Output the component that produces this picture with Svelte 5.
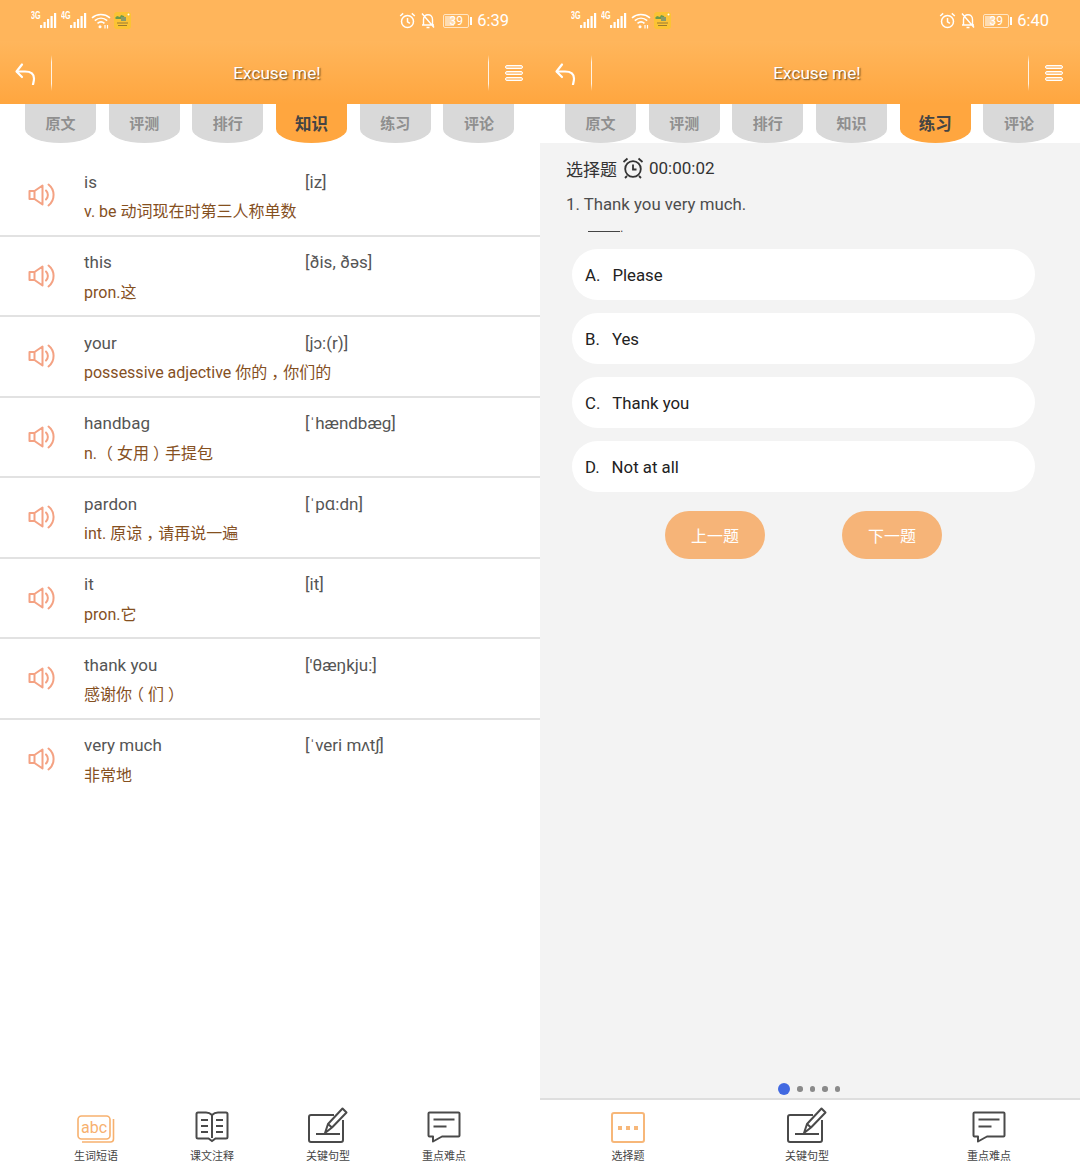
<script>
  const tabs = ['原文', '评测', '排行', '知识', '练习', '评论'];

  const words = [
    { en: 'is', ipa: '[iz]', cn: 'v. be 动词现在时第三人称单数' },
    { en: 'this', ipa: '[ðis, ðəs]', cn: 'pron.这' },
    { en: 'your', ipa: '[jɔ:(r)]', cn: 'possessive adjective 你的，你们的' },
    { en: 'handbag', ipa: '[ˈhændbæg]', cn: 'n. （女用）手提包' },
    { en: 'pardon', ipa: '[ˈpɑ:dn]', cn: 'int. 原谅，请再说一遍' },
    { en: 'it', ipa: '[it]', cn: 'pron.它' },
    { en: 'thank you', ipa: "['θæŋkju:]", cn: '感谢你（们）' },
    { en: 'very much', ipa: '[ˈveri mʌtʃ]', cn: '非常地' }
  ];

  const options = [
    { key: 'A.', text: 'Please' },
    { key: 'B.', text: 'Yes' },
    { key: 'C.', text: 'Thank you' },
    { key: 'D.', text: 'Not at all' }
  ];

  // full-width punctuation sits centred in the cell on the device
  const parts = (s) => s.split(/([，（）])/);
  const isPunct = (s) => /^[，（）]$/.test(s);
</script>

{#snippet bars(label)}
  <span class="net">
    <i class="net-label">{label}</i>
    <svg width="17" height="15" viewBox="0 0 17 15">
      <g fill="#fff">
        <rect x="0" y="12" width="2.2" height="3" />
        <rect x="3.500" y="9" width="2.2" height="6" />
        <rect x="7" y="6" width="2.2" height="9" />
        <rect x="10.500" y="3" width="2.2" height="12" />
        <rect x="14" y="0" width="2.2" height="15" />
      </g>
    </svg>
  </span>
{/snippet}

{#snippet statusbar(time)}
  <div class="status">
    <div class="status-left">
      {@render bars('3G')}
      {@render bars('4G')}
      <svg class="wifi" width="20" height="16" viewBox="0 0 20 16" fill="none" stroke="#fff" stroke-width="1.6">
        <path d="M1 4.800C6 .4 13.500 .4 19 4.800" />
        <path d="M3.800 7.600C7.500 4.500 12.500 4.500 16.200 7.600" />
        <path d="M6.500 10.300C8.600 8.600 11.400 8.600 13.500 10.300" />
        <circle cx="9" cy="13.800" r="1.500" fill="#fff" stroke="none" />
        <path d="M14 12v3.500M16.500 12v3.500" stroke-width="1.200" />
      </svg>
      <svg class="appicon" width="17" height="17" viewBox="0 0 17 17">
        <rect width="17" height="17" rx="3" fill="#fcc334" />
        <path d="M1 6l2-2 3 1 1-2 3 1 1 3H2z" fill="#6d9a4a" />
        <rect x="7" y="5" width="5" height="4" fill="#8a9a6a" />
        <path d="M3 11h11M4 13.500h9" stroke="#9a7a30" stroke-width="1" />
        <circle cx="14.500" cy="2.500" r="1" fill="#fff" />
      </svg>
    </div>
    <div class="status-right">
      <svg width="17" height="17" viewBox="0 0 17 17" fill="none" stroke="#fff" stroke-width="1.500">
        <circle cx="8.500" cy="9.500" r="6" />
        <path d="M8.500 6v3.800l2.400 1.600M1.200 4l3-2.600M15.800 4l-3-2.600" />
      </svg>
      <svg class="bell" width="16" height="17" viewBox="0 0 16 17" fill="none" stroke="#fff" stroke-width="1.400">
        <path d="M3.500 12.500V7.500C3.500 4.500 5.500 2.800 8 2.800s4.500 1.700 4.500 4.700v5M2 13h12M6.500 15.500h3M2 1.500l12 14" />
      </svg>
      <span class="battery"><b></b><em>39</em></span>
      <span class="battery-tip"></span>
      <span class="time">{time}</span>
    </div>
  </div>
{/snippet}

{#snippet topbar()}
  <header class="topbar">
    <button class="back" aria-label="back">
      <svg width="24" height="24" viewBox="0 0 24 24" fill="none" stroke="#fff" stroke-width="2.200" stroke-linecap="round" stroke-linejoin="round">
        <path d="M8 3.500L2.500 10.500 8 16" />
        <path d="M3 10.500H11c5.500 0 9 2.500 9 7 0 2-.5 3.500-1 6" />
      </svg>
    </button>
    <span class="divider"></span>
    <h1>Excuse me!</h1>
    <span class="divider"></span>
    <button class="menu" aria-label="menu"><i></i><i></i><i></i></button>
  </header>
{/snippet}

{#snippet tabbar(active)}
  <nav class="tabs">
    {#each tabs as tab}
      <span class="tab" class:active={tab === active}>{tab}</span>
    {/each}
  </nav>
{/snippet}

{#snippet speaker()}
  <svg class="speaker" width="28" height="26" viewBox="0 0 28 26" fill="none" stroke="#f4a283" stroke-width="2" stroke-linejoin="round" stroke-linecap="round">
    <path d="M1.500 9h5v8h-5zM6.500 9l8-5.500v19l-8-5.500" />
    <path d="M18 8.500c2.500 2.500 2.500 6.500 0 9" />
    <path d="M20.500 2.500c6.500 5 7 15.500 0 21" />
  </svg>
{/snippet}

{#snippet iconAbc()}
  <svg width="38" height="28" viewBox="0 0 38 28" fill="none" stroke="#f7b16f" stroke-width="1.600">
    <rect x="1" y="1" width="32" height="23" rx="3.500" />
    <path d="M36.500 4v20c0 2-1 3-3 3H5" />
    <text x="17" y="18" text-anchor="middle" class="abc">abc</text>
  </svg>
{/snippet}

{#snippet iconBook()}
  <svg width="34" height="32" viewBox="0 0 34 32" fill="none" stroke="#4a4a4a" stroke-width="2">
    <path d="M17 4c-2-2-4-2.500-6-2.500H3C2 1.500 1.500 2 1.500 3v23c0 1 .5 1.500 1.500 1.500h10.500L17 30l3.500-2.500H31c1 0 1.500-.5 1.500-1.500V3c0-1-.5-1.500-1.500-1.500h-8C21 1.500 19 2 17 4zv23" />
    <path d="M6 9h7M6 15h7M6 21h7M21 9h7M21 15h7M21 21h7" />
  </svg>
{/snippet}

{#snippet iconPen()}
  <svg width="40" height="36" viewBox="0 0 40 36" fill="none" stroke="#4a4a4a" stroke-width="2" stroke-linejoin="round">
    <path d="M26 8H3c-1.200 0-2 .8-2 2v23c0 1.200.8 2 2 2h30c1.200 0 2-.8 2-2V13" />
    <path d="M8 27h24" />
    <path d="M17 26l3-9L34.500 1.500l4 4L24 20.500zM20 17l4 3.500" />
  </svg>
{/snippet}

{#snippet iconChat()}
  <svg width="34" height="32" viewBox="0 0 34 32" fill="none" stroke="#4a4a4a" stroke-width="2" stroke-linejoin="round">
    <path d="M2.500 1.500h29c.6 0 1 .4 1 1v22c0 .6-.4 1-1 1H15L6 30.500v-5H2.500c-.6 0-1-.4-1-1v-22c0-.6.4-1 1-1z" />
    <path d="M6.500 8.500h21M6.500 15.500h13" />
  </svg>
{/snippet}

{#snippet iconDots()}
  <svg width="34" height="31" viewBox="0 0 34 31" fill="none">
    <rect x="1" y="1" width="32" height="29" rx="2" stroke="#f7b779" stroke-width="2" />
    <g fill="#f7b779">
      <rect x="7" y="14" width="4" height="4" />
      <rect x="15" y="14" width="4" height="4" />
      <rect x="23" y="14" width="4" height="4" />
    </g>
  </svg>
{/snippet}

<div class="screen">
  <section class="panel">
    {@render statusbar('6:39')}
    {@render topbar()}
    {@render tabbar('知识')}
    <ul class="words">
      {#each words as w}
        <li>
          {@render speaker()}
          <div class="word-text">
            <div class="word-top">
              <span class="en">{w.en}</span>
              <span class="ipa">{w.ipa}</span>
            </div>
            <div class="cn">
              {#each parts(w.cn) as part}
                {#if isPunct(part)}<span class="punct">{part}</span>{:else}{part}{/if}
              {/each}
            </div>
          </div>
        </li>
      {/each}
    </ul>
    <footer class="bottom four">
      <div class="nav-item">{@render iconAbc()}<span>生词短语</span></div>
      <div class="nav-item">{@render iconBook()}<span>课文注释</span></div>
      <div class="nav-item">{@render iconPen()}<span>关键句型</span></div>
      <div class="nav-item">{@render iconChat()}<span>重点难点</span></div>
    </footer>
  </section>

  <section class="panel">
    {@render statusbar('6:40')}
    {@render topbar()}
    {@render tabbar('练习')}
    <main class="quiz">
      <div class="quiz-head">
        <span class="quiz-title">选择题</span>
        <svg width="22" height="22" viewBox="0 0 22 22" fill="none" stroke="#333" stroke-width="1.800">
          <circle cx="11" cy="12" r="7.800" />
          <path d="M11 7.500V12.500h3.500M1.500 5L5.500 1.500M20.500 5l-4-3.500M5 19l-2 2M17 19l2 2" />
        </svg>
        <span class="timer">00:00:02</span>
      </div>
      <p class="question">1. Thank you very much.</p>
      <p class="blank"><u></u>.</p>
      <div class="options">
        {#each options as o}
          <div class="option"><span class="key">{o.key}</span>{o.text}</div>
        {/each}
      </div>
      <div class="actions">
        <button class="step">上一题</button>
        <button class="step">下一题</button>
      </div>
      <div class="dots">
        <i class="current"></i><i></i><i></i><i></i><i></i>
      </div>
    </main>
    <footer class="bottom three">
      <div class="nav-item">{@render iconDots()}<span>选择题</span></div>
      <div class="nav-item">{@render iconPen()}<span>关键句型</span></div>
      <div class="nav-item">{@render iconChat()}<span>重点难点</span></div>
    </footer>
  </section>
</div>

<style>
  :global(body) {
    background: #fff;
  }
  .screen {
    display: flex;
    width: 1080px;
    height: 1170px;
    font-family: Roboto, "Noto Sans CJK SC", sans-serif;
    overflow: hidden;
  }
  .panel {
    width: 540px;
    height: 1170px;
    display: flex;
    flex-direction: column;
    background: #fff;
  }

  .status {
    height: 41px;
    flex: none;
    background: #ffb55b;
    display: flex;
    justify-content: space-between;
    align-items: center;
    padding: 0 31px;
    color: #fff;
  }
  .status-left,
  .status-right {
    display: flex;
    align-items: center;
  }
  .net {
    position: relative;
    display: block;
    width: 30px;
    height: 15px;
    padding-left: 9px;
    box-sizing: border-box;
  }
  .net-label {
    position: absolute;
    left: 0;
    top: -2px;
    font: normal 700 10px/10px "Liberation Sans", sans-serif;
    transform: scaleX(0.72);
    transform-origin: left;
  }
  .wifi {
    margin-right: 3px;
  }
  .bell {
    margin-left: 4px;
  }
  .battery {
    position: relative;
    width: 26px;
    height: 14px;
    margin-left: 7px;
    border: 1px solid #ffe6c6;
    border-radius: 2px;
    box-sizing: border-box;
    display: block;
  }
  .battery b {
    position: absolute;
    left: 1px;
    top: 1px;
    bottom: 1px;
    width: 9px;
    background: #ffdcb0;
  }
  .battery em {
    position: absolute;
    inset: -1px 0 0 0;
    text-align: center;
    font: normal 12px/14px Roboto, sans-serif;
    color: #fff;
  }
  .battery-tip {
    width: 2px;
    height: 8px;
    margin-left: 1px;
    background: #fff;
  }
  .time {
    margin-left: 5px;
    font-size: 16.500px;
  }

  .topbar {
    height: 63px;
    flex: none;
    display: flex;
    align-items: center;
    background: linear-gradient(#ffb65c, #ffa63f);
    color: #fff;
  }
  .topbar button {
    background: none;
    border: 0;
    padding: 0;
    display: flex;
  }
  .back {
    margin-left: 14px;
    margin-right: 13px;
  }
  .divider {
    width: 1px;
    height: 36px;
    background: linear-gradient(transparent, #fff 20%, #fff 80%, transparent);
    opacity: 0.85;
  }
  h1 {
    flex: 1;
    margin: 0;
    padding-left: 14px;
    text-align: center;
    font-size: 17.200px;
    font-weight: 400;
    text-shadow: 1px 1px 1.500px #5f4016;
  }
  .menu {
    margin-left: 16px;
    margin-right: 17px;
    width: 18px;
    flex-direction: column;
    gap: 2px;
  }
  .menu i {
    display: block;
    width: 18px;
    height: 4px;
    box-sizing: border-box;
    border: 1px solid #fff;
    border-radius: 2px;
    background: #ffcf97;
  }

  .tabs {
    height: 39px;
    flex: none;
    display: flex;
    gap: 12.700px;
    padding-left: 25px;
    background: #fff;
  }
  .tab {
    width: 71px;
    height: 39px;
    flex: none;
    background: #d9d9d9;
    border-radius: 0 0 35.500px 35.500px / 0 0 14px 14px;
    text-align: center;
    font-size: 15px;
    font-weight: 700;
    line-height: 41px;
    color: #8f8f8f;
  }
  .tab.active {
    background: #ffa63f;
    color: #444;
    font-size: 16.500px;
  }

  .words {
    list-style: none;
    margin: 13px 0 0;
    padding: 0;
    flex: 1;
  }
  .words li {
    height: 80.500px;
    box-sizing: border-box;
    display: flex;
    border-bottom: 2px solid #e2e2e2;
  }
  .words li:last-child {
    border-bottom: 0;
  }
  .speaker {
    margin: 26px 0 0 28px;
    flex: none;
  }
  .word-text {
    margin-left: 28px;
    padding-top: 15.500px;
  }
  .word-top {
    display: flex;
    font-size: 17px;
    line-height: 20px;
    color: #555;
  }
  .en {
    width: 221px;
  }
  .cn {
    margin-top: 10.500px;
    font-size: 16px;
    line-height: 20px;
    color: #85501f;
  }
  .punct {
    display: inline-block;
    width: 1em;
    text-align: center;
    font-feature-settings: "halt";
  }

  .bottom {
    height: 70px;
    flex: none;
    display: grid;
    background: #fff;
  }
  .bottom.four {
    grid-template-columns: repeat(4, 116px);
    padding: 0 38px;
  }
  .bottom.three {
    grid-template-columns: 176px 182px 182px;
    border-top: 2px solid #dedede;
    height: 72px;
    box-sizing: border-box;
  }
  .nav-item {
    display: flex;
    flex-direction: column;
    align-items: center;
    justify-content: flex-end;
    gap: 7px;
    padding-bottom: 6px;
  }
  .nav-item span {
    font-size: 11px;
    line-height: 14px;
    color: #444;
  }
  .abc {
    font: 16px Roboto, sans-serif;
    stroke: none;
    fill: #f7b16f;
  }

  .quiz {
    flex: 1;
    background: #f3f3f3;
    display: flex;
    flex-direction: column;
    padding: 14px 0 0 26px;
    position: relative;
    min-height: 0;
  }
  .quiz-head {
    display: flex;
    align-items: center;
    height: 22px;
    font-size: 17px;
    color: #333;
  }
  .quiz-head svg {
    margin: 0 5px;
  }
  .question {
    margin: 15px 0 0;
    font-size: 16.800px;
    line-height: 20px;
    color: #4d4d4d;
  }
  .blank {
    margin: 4px 0 0 22px;
    height: 20px;
    line-height: 20px;
    font-size: 13px;
    display: flex;
    color: #555;
  }
  .blank u {
    display: block;
    width: 32px;
    height: 1px;
    margin-top: 13px;
    background: #444;
  }
  .options {
    display: flex;
    flex-direction: column;
    gap: 13px;
    margin: 11px 0 0 6px;
    width: 463px;
  }
  .option {
    height: 51px;
    border-radius: 25.500px;
    background: #fff;
    display: flex;
    align-items: center;
    padding-left: 13px;
    font-size: 16.800px;
    color: #222;
  }
  .key {
    margin-right: 12px;
  }
  .actions {
    display: flex;
    gap: 77px;
    margin: 19px 0 0 99px;
  }
  .step {
    width: 100px;
    height: 48px;
    border: 0;
    border-radius: 24px;
    background: #f6b478;
    color: #fff;
    font: 16px Roboto, "Noto Sans CJK SC", sans-serif;
  }
  .dots {
    position: absolute;
    left: 238px;
    bottom: 3px;
    display: flex;
    align-items: center;
    gap: 7px;
  }
  .dots i {
    width: 5.500px;
    height: 5.500px;
    border-radius: 50%;
    background: #8a8a8a;
  }
  .dots i.current {
    width: 12px;
    height: 12px;
    background: #4169e1;
  }
</style>
